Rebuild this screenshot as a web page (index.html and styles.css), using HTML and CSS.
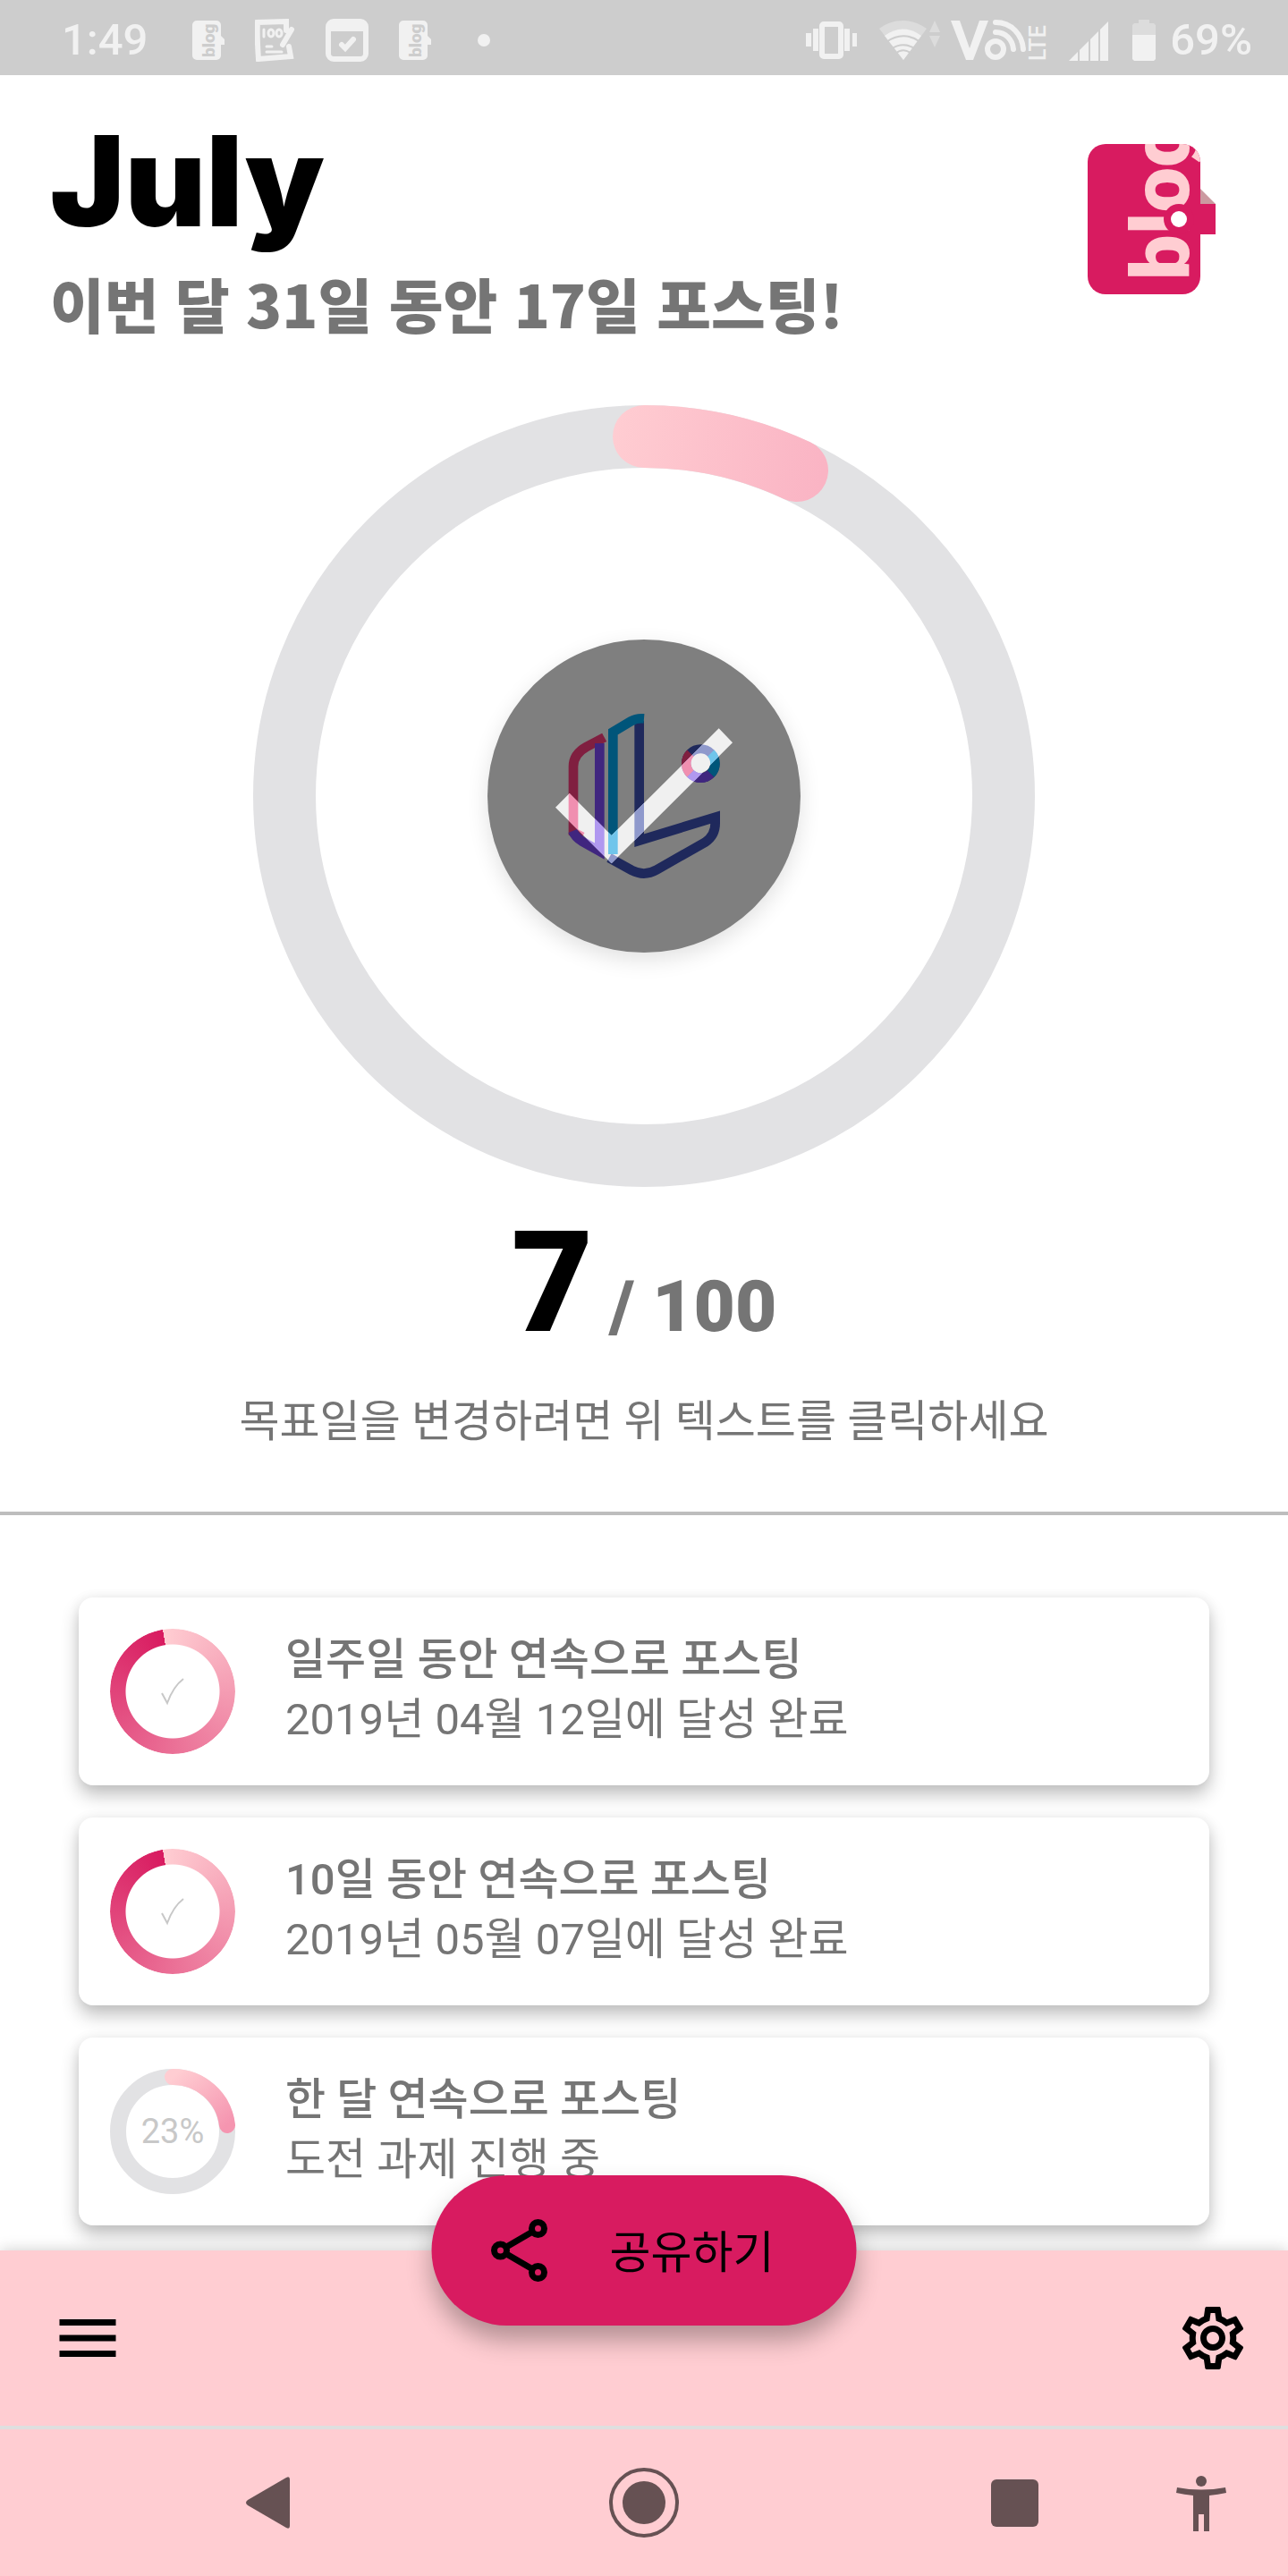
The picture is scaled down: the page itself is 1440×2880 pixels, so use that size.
FILE: index.html
```html
<!DOCTYPE html>
<html lang="ko">
<head>
    <meta charset="UTF-8">
    <meta name="viewport" content="width=device-width, initial-scale=1">
    <title>July</title>
    <link rel="stylesheet" href="styles.css">
</head>
<body>
<!-- status bar -->
<div class="status">
    <div class="status-left">
        <span class="clock">1:49</span>
        <svg class="s-blog" width="38" height="44" viewBox="0 0 38 44">
            <path d="M6 0h22a5 5 0 0 1 5 5v12l4 4v6h-4v12a5 5 0 0 1-5 5H6a5 5 0 0 1-5-5V5a5 5 0 0 1 5-5z"/>
            <text class="s-blog-text" transform="translate(26 41) rotate(-90)">blog</text>
        </svg>
        <svg class="s-note" width="46" height="48" viewBox="0 0 46 48">
            <path class="line" d="M35 13V3L3 4c-1 14 0 26 1 41l36-3-2-11M41 12L31 29"/>
            <path class="thin" d="M10 12v8M13 31h6M13 37h17"/>
            <ellipse class="thin" cx="18" cy="16" rx="3" ry="4"/>
            <ellipse class="thin" cx="27" cy="16" rx="3" ry="4"/>
        </svg>
        <svg class="s-cal" width="48" height="48" viewBox="0 0 48 48">
            <rect class="line" x="3" y="3" width="42" height="42" rx="6"/>
            <path d="M3 3h42v11H3z"/>
            <path class="line" d="M18 29l4 4 9-10"/>
        </svg>
        <svg class="s-blog" width="38" height="44" viewBox="0 0 38 44">
            <path d="M6 0h22a5 5 0 0 1 5 5v12l4 4v6h-4v12a5 5 0 0 1-5 5H6a5 5 0 0 1-5-5V5a5 5 0 0 1 5-5z"/>
            <text class="s-blog-text" transform="translate(26 41) rotate(-90)">blog</text>
        </svg>
        <span class="dot"></span>
    </div>
    <div class="status-right">
        <svg width="58" height="42" viewBox="0 0 58 42">
            <rect class="line" x="18" y="3" width="21" height="36" rx="2"/>
            <path d="M0 13h6v15H0zM8 8h6v25H8zM43 8h6v25h-6zM52 13h5v15h-5z"/>
        </svg>
        <svg width="68" height="46" viewBox="0 0 68 46">
            <path class="faint" d="M0 10C16-2 37-2 53 10L27 45zM56 14l6-13 6 13zM56 18h12l-6 13z"/>
            <path d="M6 18C19 8 34 8 47 18L27 45z"/>
            <path class="cut" d="M8 25c12-9 26-9 38 0M13 33c9-6 19-6 28 0M18 38c6-5 12-5 18 0"/>
        </svg>
        <svg class="s-volte" width="112" height="50" viewBox="0 -2 112 50">
            <path d="M0 1h10l11 31L32 1h10L25 45h-8z"/>
            <circle class="line" cx="50" cy="33" r="9"/>
            <path class="line" d="M50 3c18 0 30 14 31 30M50 14c11 0 19 8 20 19"/>
            <text class="s-lte" transform="translate(106 46) rotate(-90)">LTE</text>
        </svg>
        <svg class="s-signal" width="44" height="45" viewBox="0 0 44 45">
            <path d="M0 45L44 1v44z"/>
            <path class="bar-cut" d="M11 0v45M23 0v45M34 0v45"/>
        </svg>
        <svg class="s-battery" width="26" height="46" viewBox="0 0 26 46">
            <path class="faint" d="M7 0h12v4h5l2 2v12H0V6l2-2h5z"/>
            <path d="M0 17h26v27l-2 2H2l-2-2z"/>
        </svg>
        <span class="clock">69%</span>
    </div>
</div>

<main class="main">
    <header class="head">
        <div>
            <h1 class="month">July</h1>
            <p class="summary">이번 달 31일 동안 17일 포스팅!</p>
        </div>
        <svg class="logo" width="143" height="168" viewBox="0 0 143 168">
            <defs>
                <clipPath id="book"><rect width="126" height="168" rx="20"/></clipPath>
            </defs>
            <path fill="#cb9aa0" d="M126 50l17 17h-17z"/>
            <path fill="#d81b60" d="M120 67h23v34h-23z"/>
            <g clip-path="url(#book)">
                <rect width="126" height="168" fill="#d81b60"/>
                <text class="logo-text" transform="translate(113 152) rotate(-90)">blog</text>
                <circle cx="102" cy="84" r="17" fill="#d81b60"/>
            </g>
            <circle cx="102" cy="84" r="9" fill="#fff"/>
        </svg>
    </header>

    <!-- big progress ring -->
    <section class="goal">
        <div class="ring">
            <svg width="874" height="874" viewBox="0 0 874 874">
                <defs>
                    <linearGradient id="arc" gradientUnits="userSpaceOnUse" x1="402" y1="0" x2="643" y2="40">
                        <stop offset="0" stop-color="#ffcdd2"/>
                        <stop offset="1" stop-color="#fab4c4"/>
                    </linearGradient>
                </defs>
                <circle class="track" cx="437" cy="437" r="402"/>
                <path class="arc" d="M437 35A402 402 0 0 1 608 73"/>
            </svg>
            <button class="disk" aria-label="완료">
                <svg width="350" height="350" viewBox="78 78 1050 1050">
                    <g fill="none" stroke-width="32">
                        <path stroke="#801f40" d="M470 406l-60 32q-44 24-44 66v220l30 16"/>
                        <path stroke="#40267f" d="M454 426v362l-60-34q-22-14-30-34"/>
                        <path stroke="#1f295c" d="M587 350v402l255-78v20q0 42-34 64l-162 92q-42 24-84 2l-76-42"/>
                        <path stroke="#00557a" d="M603 343q-26-2-44 9l-60 36v410"/>
                        <circle cx="793" cy="494" r="48" stroke="#1f295c"/>
                        <path stroke="#801f40" d="M759 460a48 48 0 0 0 0 68"/>
                        <path stroke="#40267f" d="M759 528a48 48 0 0 0 68 0"/>
                        <path stroke="#00557a" d="M827 528a48 48 0 0 0 0-68"/>
                    </g>
                    <path fill="#f0f0f0" d="M353 594l141 141 360-359 46 48-406 405-188-188z"/>
                    <clipPath id="tick"><path d="M353 594l141 141 360-359 46 48-406 405-188-188z"/></clipPath>
                    <g clip-path="url(#tick)" fill="none" stroke-width="32">
                        <path stroke="#f08fb0" d="M366 504v220l30 16"/>
                        <path stroke="#b098f0" d="M454 426v362l-60-34"/>
                        <path stroke="#8f99cc" d="M587 350v402M562 852l-76-42"/>
                        <path stroke="#70c5eb" d="M499 388v410"/>
                        <circle cx="793" cy="494" r="48" stroke="#8f99cc"/>
                        <path stroke="#f08fb0" d="M759 460a48 48 0 0 0 0 68"/>
                        <path stroke="#b098f0" d="M759 528a48 48 0 0 0 68 0"/>
                        <path stroke="#70c5eb" d="M827 528a48 48 0 0 0 0-68"/>
                    </g>
                    <circle cx="793" cy="492" r="32" fill="#f0f0f0"/>
                </svg>
            </button>
        </div>
        <button class="count">7<span class="total">/ 100</span></button>
        <p class="hint">목표일을 변경하려면 위 텍스트를 클릭하세요</p>
    </section>

    <!-- challenges -->
    <ul class="list">
        <li class="card">
            <div class="mini">
                <div class="mini-full"></div>
                <svg class="mini-label" width="28" height="32" viewBox="0 0 28 32">
                    <path class="check" d="M2 18l6 11C12 18 18 8 26 2"/>
                </svg>
            </div>
            <div class="card-body">
                <h2 class="card-title">일주일 동안 연속으로 포스팅</h2>
                <p class="card-text">2019년 04월 12일에 달성 완료</p>
            </div>
        </li>
        <li class="card">
            <div class="mini">
                <div class="mini-full"></div>
                <svg class="mini-label" width="28" height="32" viewBox="0 0 28 32">
                    <path class="check" d="M2 18l6 11C12 18 18 8 26 2"/>
                </svg>
            </div>
            <div class="card-body">
                <h2 class="card-title">10일 동안 연속으로 포스팅</h2>
                <p class="card-text">2019년 05월 07일에 달성 완료</p>
            </div>
        </li>
        <li class="card">
            <div class="mini">
                <svg width="140" height="140" viewBox="0 0 140 140">
                    <defs>
                        <linearGradient id="mini-arc" x1="0" y1="0" x2="1" y2="1">
                            <stop offset="0" stop-color="#ffcdd2"/>
                            <stop offset="1" stop-color="#f595b0"/>
                        </linearGradient>
                    </defs>
                    <circle class="mini-track" cx="70" cy="70" r="61"/>
                    <path class="mini-arc" d="M70 9A61 61 0 0 1 131 63"/>
                </svg>
                <span class="mini-label percent">23%</span>
            </div>
            <div class="card-body">
                <h2 class="card-title">한 달 연속으로 포스팅</h2>
                <p class="card-text">도전 과제 진행 중</p>
            </div>
        </li>
    </ul>
</main>

<footer class="foot">
    <button class="share">
        <svg width="84" height="84" viewBox="0 0 24 24">
            <path d="M18 5L6 12l12 7" fill="none" stroke="#000" stroke-width="2"/>
            <g fill="#d81b60" stroke="#000" stroke-width="2">
                <circle cx="18" cy="5" r="2"/>
                <circle cx="6" cy="12" r="2"/>
                <circle cx="18" cy="19" r="2"/>
            </g>
        </svg>
        <span class="share-text">공유하기</span>
    </button>
    <div class="bar">
        <button class="icon" aria-label="메뉴">
            <svg width="84" height="84" viewBox="0 0 24 24">
                <path d="M3 18h18v-2H3v2zm0-5h18v-2H3v2zm0-7v2h18V6H3z"/>
            </svg>
        </button>
        <button class="icon" aria-label="설정">
            <svg width="84" height="84" viewBox="0 0 24 24">
                <path d="M19.43 12.98c.04-.32.07-.64.07-.98 0-.34-.03-.66-.07-.98l2.11-1.65c.19-.15.24-.42.12-.64l-2-3.46c-.09-.16-.26-.25-.44-.25-.06 0-.12.01-.17.03l-2.49 1c-.52-.4-1.08-.73-1.69-.98l-.38-2.65C14.46 2.18 14.25 2 14 2h-4c-.25 0-.46.18-.49.42l-.38 2.65c-.61.25-1.17.59-1.69.98l-2.49-1c-.06-.02-.12-.03-.18-.03-.17 0-.34.09-.43.25l-2 3.46c-.13.22-.07.49.12.64l2.11 1.65c-.04.32-.07.65-.07.98 0 .33.03.66.07.98l-2.11 1.65c-.19.15-.24.42-.12.64l2 3.46c.09.16.26.25.44.25.06 0 .12-.01.17-.03l2.49-1c.52.4 1.08.73 1.69.98l.38 2.65c.03.24.24.42.49.42h4c.25 0 .46-.18.49-.42l.38-2.65c.61-.25 1.17-.59 1.69-.98l2.49 1c.06.02.12.03.18.03.17 0 .34-.09.43-.25l2-3.46c.12-.22.07-.49-.12-.64l-2.11-1.65zm-1.98-1.71c.04.31.05.52.05.73 0 .21-.02.43-.05.73l-.14 1.13.89.7 1.08.84-.7 1.21-1.27-.51-1.04-.42-.9.68c-.43.32-.84.56-1.25.73l-1.06.43-.16 1.13-.2 1.35h-1.4l-.19-1.35-.16-1.13-1.06-.43c-.43-.18-.83-.41-1.23-.71l-.91-.7-1.06.43-1.27.51-.7-1.21 1.08-.84.89-.7-.14-1.13c-.03-.31-.05-.54-.05-.74s.02-.43.05-.73l.14-1.13-.89-.7-1.08-.84.7-1.21 1.27.51 1.04.42.9-.68c.43-.32.84-.56 1.25-.73l1.06-.43.16-1.13.2-1.35h1.39l.19 1.35.16 1.13 1.06.43c.43.18.83.41 1.23.71l.91.7 1.06-.43 1.27-.51.7 1.21-1.07.85-.89.7.14 1.13zM12 8c-2.21 0-4 1.79-4 4s1.79 4 4 4 4-1.79 4-4-1.79-4-4-4zm0 6c-1.1 0-2-.9-2-2s.9-2 2-2 2 .9 2 2-.9 2-2 2z"/>
            </svg>
        </button>
    </div>
    <nav class="nav">
        <button class="icon" aria-label="뒤로">
            <svg width="80" height="80" viewBox="0 0 80 80">
                <path d="M17 37L60 12q4-2 4 2v52q0 4-4 2L17 43q-4-3 0-6z"/>
            </svg>
        </button>
        <button class="icon" aria-label="홈">
            <svg width="80" height="80" viewBox="0 0 80 80">
                <circle cx="40" cy="40" r="37" fill="none" stroke="#665153" stroke-width="4"/>
                <circle cx="40" cy="40" r="24"/>
            </svg>
        </button>
        <button class="icon" aria-label="최근 앱">
            <svg width="80" height="80" viewBox="0 0 80 80">
                <rect x="8" y="14" width="53" height="53" rx="6"/>
            </svg>
        </button>
        <button class="icon access" aria-label="접근성">
            <svg width="56" height="62" viewBox="0 0 56 62">
                <circle cx="28" cy="6" r="6"/>
                <path d="M1 13q27 5 54 0l1 6q-9 2-19 3v40h-6V43h-6v19h-6V22q-10-1-19-3z"/>
            </svg>
        </button>
    </nav>
</footer>
</body>
</html>
```
FILE: styles.css
```css
* {
    margin: 0;
    padding: 0;
    box-sizing: border-box;
}

body {
    display: flex;
    flex-direction: column;
    min-height: 100vh;
    background: #fff;
    color: #757575;
    font-family: Roboto, "Noto Sans CJK KR", sans-serif;
    font-size: 49px;
}

svg {
    display: block;
    flex: none;
}

button {
    border: none;
    background: none;
    font: inherit;
    cursor: pointer;
}

/* status bar */
.status {
    display: flex;
    justify-content: space-between;
    height: 84px;
    padding: 6px 40px 0 69px;
    background: #cdcdcd;
    color: #f1f1f1;
}

.status svg {
    fill: #f1f1f1;
}

.status-left,
.status-right {
    display: flex;
    align-items: center;
    gap: 33px;
}

.status-right {
    gap: 24px;
}

.clock {
    font-weight: 500;
    line-height: 60px;
}

.s-blog:first-of-type {
    margin-left: 16px;
}

.s-blog-text {
    font-size: 19px;
    font-weight: 900;
    fill: #cdcdcd;
}

.status .line {
    fill: none;
    stroke: #f1f1f1;
    stroke-width: 6;
    stroke-linecap: round;
}

.status .thin {
    fill: none;
    stroke: #f1f1f1;
    stroke-width: 3;
    stroke-linecap: round;
}

.status .faint {
    fill: #dcdcdc;
}

.status .cut {
    fill: none;
    stroke: #cdcdcd;
    stroke-width: 2;
}

.bar-cut {
    stroke: #cdcdcd;
    stroke-width: 2;
}

.s-volte {
    margin-left: -12px;
    margin-right: -4px;
}

.s-lte {
    font-size: 25px;
    font-weight: 500;
}

.s-battery {
    margin-left: 3px;
    margin-right: -8px;
}

.dot {
    width: 14px;
    height: 14px;
    margin-left: 18px;
    border-radius: 50%;
    background: #f1f1f1;
}

/* header */
.head {
    display: flex;
    justify-content: space-between;
    padding: 50px 81px 0 56px;
}

.month {
    font-family: Inter, sans-serif;
    font-size: 140px;
    font-weight: 900;
    line-height: 136px;
    color: #000;
}

.summary {
    margin-top: 28px;
    font-family: "Noto Sans CJK KR", sans-serif;
    font-size: 66px;
    font-weight: 900;
    line-height: 80px;
}

.logo {
    margin-top: 27px;
}

.logo-text {
    font-size: 90px;
    font-weight: 900;
    fill: #ffcdd2;
}

/* goal */
.goal {
    display: flex;
    flex-direction: column;
    align-items: center;
    padding: 75px 0 70px;
    border-bottom: 4px solid #bdbdbd;
}

.ring {
    position: relative;
}

.track {
    fill: none;
    stroke: #e2e2e4;
    stroke-width: 70;
}

.arc {
    fill: none;
    stroke: url(#arc);
    stroke-width: 70;
    stroke-linecap: round;
}

.disk {
    position: absolute;
    top: 50%;
    left: 50%;
    width: 350px;
    height: 350px;
    transform: translate(-50%, -50%);
    border-radius: 50%;
    background: #7f7f7f;
    box-shadow: 0 8px 24px rgba(0, 0, 0, 0.12);
}

.count {
    display: flex;
    align-items: baseline;
    gap: 18px;
    margin-top: 28px;
    font-size: 158px;
    font-weight: 900;
    line-height: 158px;
    color: #000;
}

.total {
    font-size: 80px;
    line-height: 80px;
    color: #757575;
}

.hint {
    margin-top: 47px;
    line-height: 60px;
}

/* challenges */
.list {
    display: flex;
    flex-direction: column;
    gap: 36px;
    padding: 92px 88px 28px;
    list-style: none;
}

.card {
    display: flex;
    align-items: center;
    gap: 56px;
    height: 210px;
    padding: 0 35px;
    border-radius: 16px;
    background: #fff;
    box-shadow: 0 11px 20px rgba(0, 0, 0, 0.24), 0 0 14px rgba(0, 0, 0, 0.06);
}

.card-body {
    padding-bottom: 4px;
}

.mini {
    position: relative;
    flex: none;
    width: 140px;
    height: 140px;
}

.mini-full {
    width: 140px;
    height: 140px;
    border-radius: 50%;
    background: conic-gradient(from -9deg, #ffcdd2, #d81b60);
    -webkit-mask: radial-gradient(circle, transparent 52px, #000 53px);
    mask: radial-gradient(circle, transparent 52px, #000 53px);
}

.mini-track,
.mini-arc {
    fill: none;
    stroke: #e2e2e4;
    stroke-width: 18;
}

.mini-arc {
    stroke: url(#mini-arc);
    stroke-linecap: round;
}

.mini-label {
    position: absolute;
    top: 50%;
    left: 50%;
    transform: translate(-50%, -50%);
    color: #c8c8c8;
}

.percent {
    font-size: 38px;
    line-height: 40px;
}

.check {
    fill: none;
    stroke: #c8c8c8;
    stroke-width: 2;
}

.card-title,
.card-text {
    font-size: 49px;
    line-height: 67px;
}

.card-title {
    font-weight: 500;
}

.card-text {
    font-weight: 400;
}

/* bottom bar */
.foot {
    position: relative;
    margin-top: auto;
    background: #ffcdd2;
    box-shadow: 0 0 16px rgba(0, 0, 0, 0.2);
}

.share {
    position: absolute;
    top: -84px;
    left: 50%;
    display: flex;
    align-items: center;
    gap: 59px;
    height: 168px;
    padding: 0 92px 0 56px;
    transform: translateX(-50%);
    border-radius: 84px;
    background: #d81b60;
    box-shadow: 0 16px 28px rgba(0, 0, 0, 0.3);
    font-size: 50px;
    white-space: nowrap;
    color: #000;
}

.share-text {
    padding-bottom: 4px;
}

.bar {
    display: flex;
    align-items: center;
    justify-content: space-between;
    height: 200px;
    padding: 0 42px 0 56px;
    border-bottom: 4px solid #dfdfdf;
}

.nav {
    display: grid;
    grid-template-columns: 5fr 2fr 5fr;
    align-items: center;
    justify-items: center;
    position: relative;
    height: 164px;
}

.nav svg {
    fill: #665153;
}

.access {
    position: absolute;
    top: 52px;
    right: 69px;
}
```
